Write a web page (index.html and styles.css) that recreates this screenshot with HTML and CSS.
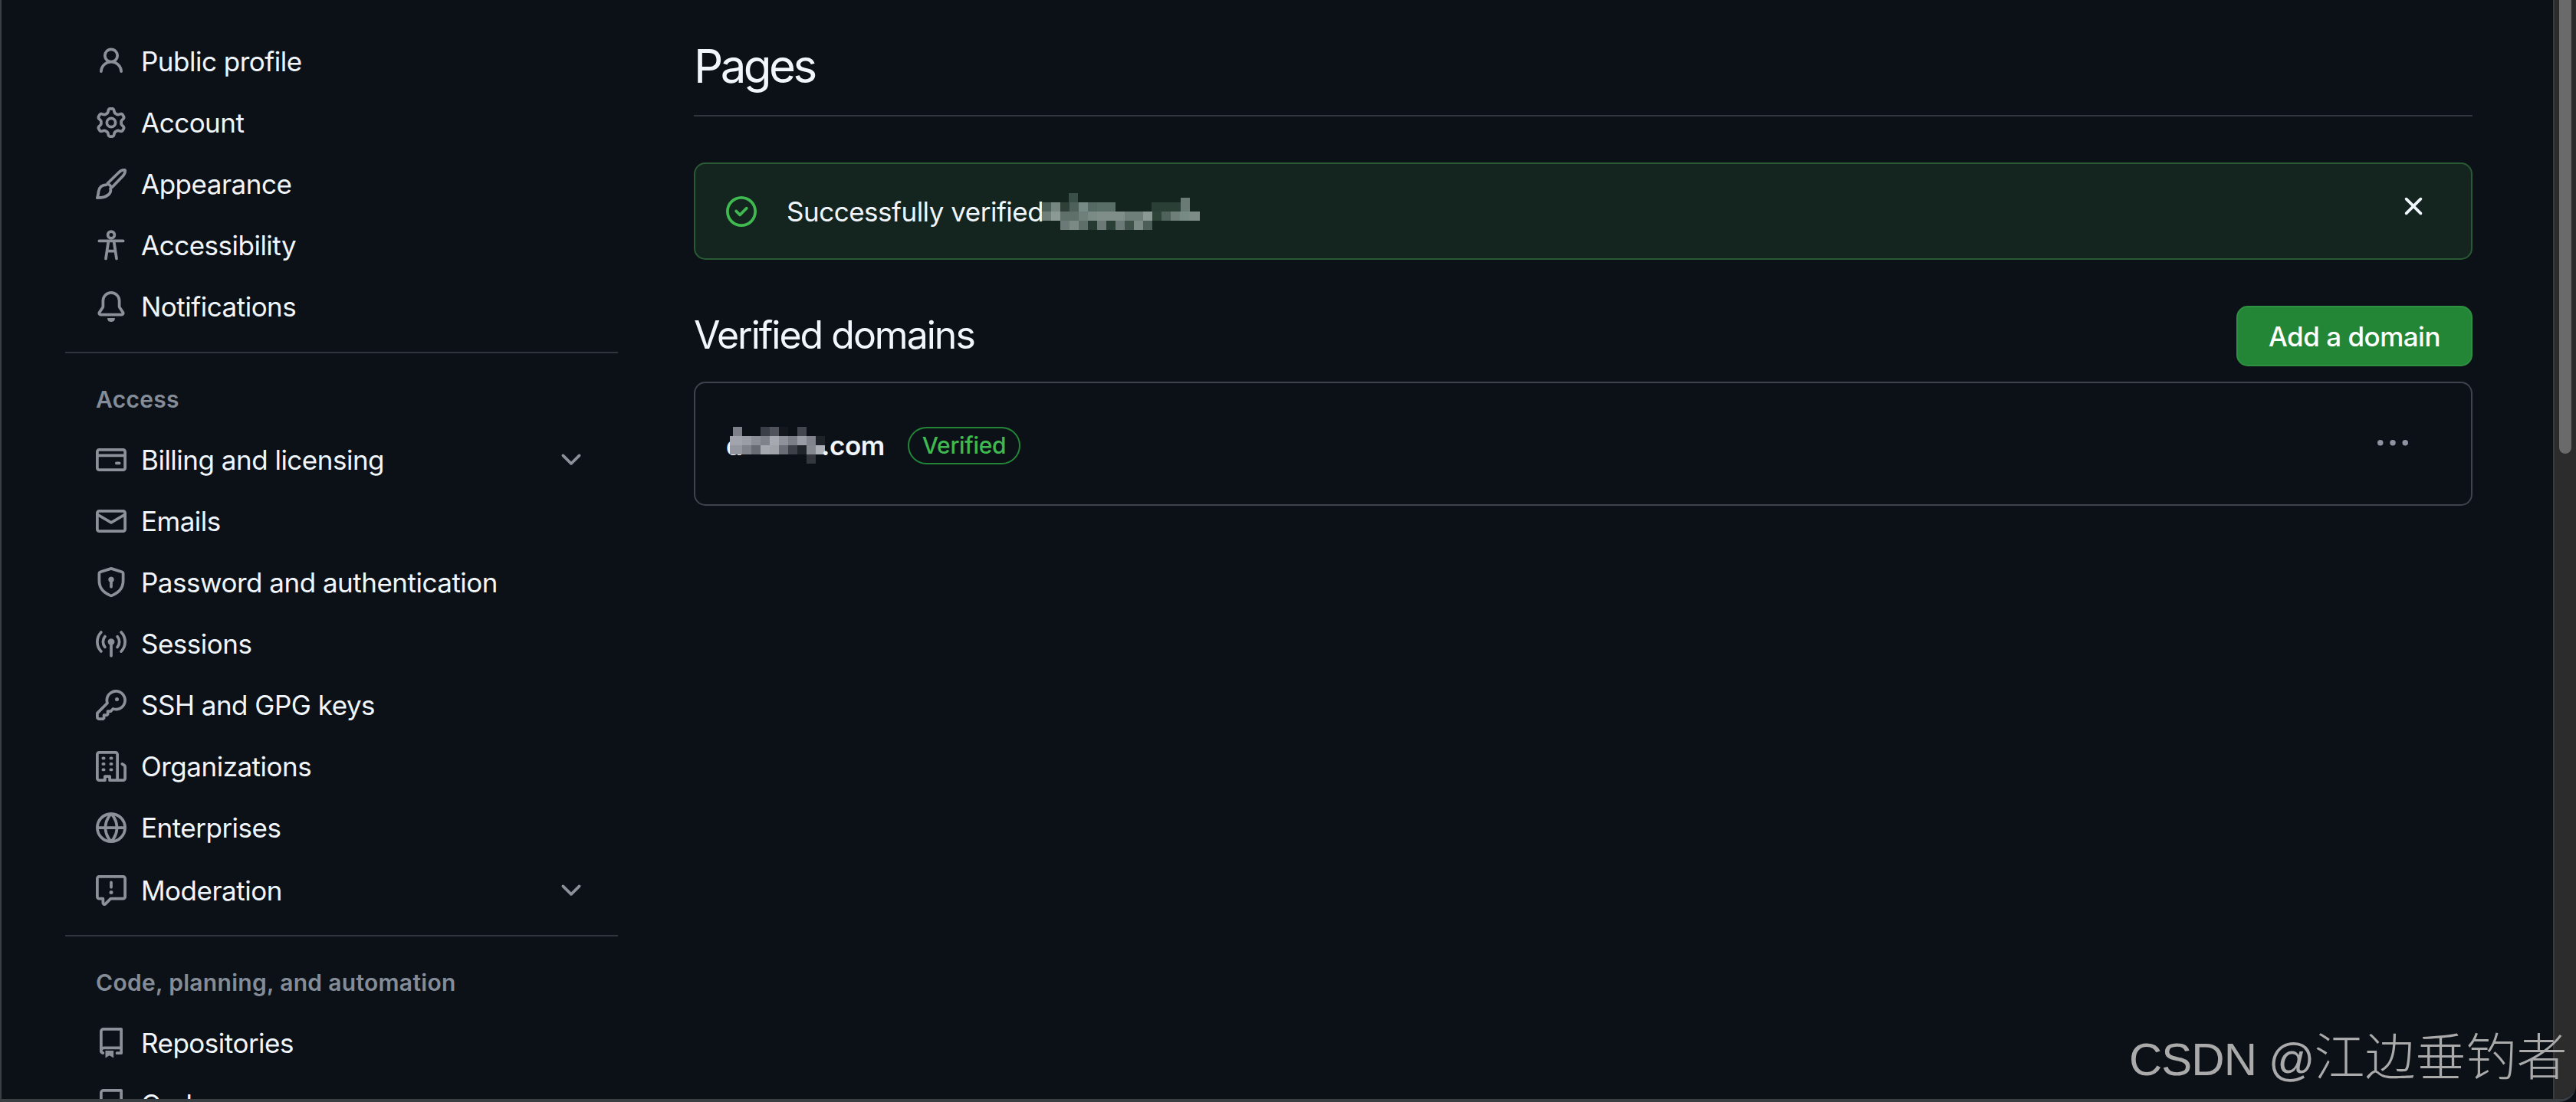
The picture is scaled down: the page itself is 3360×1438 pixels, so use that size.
FILE: index.html
```html
<!DOCTYPE html>
<html lang="en">
<head>
    <meta charset="UTF-8">
    <meta name="viewport" content="width=device-width, initial-scale=1.0">
    <title>Pages</title>
    <link rel="stylesheet" href="styles.css">
</head>
<body>
    <div class="window">
        <aside class="sidebar">
            <nav class="nav-group">
                <a class="nav-item"><svg class="icon" viewBox="0 0 16 16"><path d="M10.561 8.073a6.005 6.005 0 0 1 3.432 5.142.75.75 0 1 1-1.498.07 4.5 4.5 0 0 0-8.99 0 .75.75 0 1 1-1.498-.07 6.004 6.004 0 0 1 3.431-5.142 3.999 3.999 0 1 1 5.123 0ZM10.5 5a2.5 2.5 0 1 0-5 0 2.5 2.5 0 0 0 5 0Z"/></svg><span>Public profile</span></a>
                <a class="nav-item"><svg class="icon" viewBox="0 0 16 16"><path d="M8 0a8.2 8.2 0 0 1 .701.031C9.444.095 9.99.645 10.16 1.29l.288 1.107c.018.066.079.158.212.224.231.114.454.243.668.386.123.082.233.09.299.071l1.103-.303c.644-.176 1.392.021 1.82.63.27.385.506.792.704 1.218.315.675.111 1.422-.364 1.891l-.814.806c-.049.048-.098.147-.088.294.016.257.016.515 0 .772-.01.147.038.246.088.294l.814.806c.475.469.679 1.216.364 1.891a7.977 7.977 0 0 1-.704 1.217c-.428.61-1.176.807-1.82.63l-1.102-.302c-.067-.019-.177-.011-.3.071a5.909 5.909 0 0 1-.668.386c-.133.066-.194.158-.211.224l-.29 1.106c-.168.646-.715 1.196-1.458 1.26a8.006 8.006 0 0 1-1.402 0c-.743-.064-1.289-.614-1.458-1.26l-.289-1.106c-.018-.066-.079-.158-.212-.224a5.738 5.738 0 0 1-.668-.386c-.123-.082-.233-.09-.299-.071l-1.103.303c-.644.176-1.392-.021-1.82-.63a8.12 8.12 0 0 1-.704-1.218c-.315-.675-.111-1.422.363-1.891l.815-.806c.05-.048.098-.147.088-.294a6.214 6.214 0 0 1 0-.772c.01-.147-.038-.246-.088-.294l-.815-.806C.635 6.045.431 5.298.746 4.623a7.92 7.92 0 0 1 .704-1.217c.428-.61 1.176-.807 1.82-.63l1.102.302c.067.019.177.011.3-.071.214-.143.437-.272.668-.386.133-.066.194-.158.211-.224l.29-1.106C6.009.645 6.556.095 7.299.03 7.53.01 7.764 0 8 0Zm-.571 1.525c-.036.003-.108.036-.137.146l-.289 1.105c-.147.561-.549.967-.998 1.189-.173.086-.34.183-.5.29-.417.278-.97.423-1.529.27l-1.103-.303c-.109-.03-.175.016-.195.045-.22.312-.412.644-.573.99-.014.031-.021.11.059.19l.815.806c.411.406.562.957.53 1.456a4.709 4.709 0 0 0 0 .582c.032.499-.119 1.05-.53 1.456l-.815.806c-.081.08-.073.159-.059.19.162.346.353.677.573.989.02.03.085.076.195.046l1.102-.303c.56-.153 1.113-.008 1.53.27.161.107.328.204.501.29.447.222.85.629.997 1.189l.289 1.105c.029.109.101.143.137.146a6.6 6.6 0 0 0 1.142 0c.036-.003.108-.036.137-.146l.289-1.105c.147-.561.549-.967.998-1.189.173-.086.34-.183.5-.29.417-.278.97-.423 1.529-.27l1.103.303c.109.029.175-.016.195-.045.22-.313.411-.644.573-.99.014-.031.021-.11-.059-.19l-.815-.806c-.411-.406-.562-.957-.53-1.456a4.709 4.709 0 0 0 0-.582c-.032-.499.119-1.05.53-1.456l.815-.806c.081-.08.073-.159.059-.19a6.464 6.464 0 0 0-.573-.989c-.02-.03-.085-.076-.195-.046l-1.102.303c-.56.153-1.113.008-1.53-.27a4.44 4.44 0 0 0-.501-.29c-.447-.222-.85-.629-.997-1.189l-.289-1.105c-.029-.11-.101-.143-.137-.146a6.6 6.6 0 0 0-1.142 0ZM11 8a3 3 0 1 1-6 0 3 3 0 0 1 6 0ZM9.5 8a1.5 1.5 0 1 0-3.001.001A1.5 1.5 0 0 0 9.5 8Z"/></svg><span>Account</span></a>
                <a class="nav-item"><svg class="icon icon-line" viewBox="0 0 16 16"><path d="M6.2 7.6 12 2C13.2.9 14.8.4 15.2.8c.4.4-.2 2.1-1.2 3.2L8.4 9.8Z"/><path d="M5.6 8.4C3 8.4 1.7 10 1.4 12c-.1 1.2-.3 2.2-.65 3.25 1.75 0 4.25-.25 5.85-1.65 1.1-1 1.3-2.2 1-3.2"/></svg><span>Appearance</span></a>
                <a class="nav-item"><svg class="icon icon-line" viewBox="0 0 16 16"><circle cx="8" cy="2.6" r="1.75"/><path d="M1.75 5.75h12.5M6.6 5.75 5.2 15M9.4 5.75 10.8 15M5.8 11h4.4"/></svg><span>Accessibility</span></a>
                <a class="nav-item"><svg class="icon" viewBox="0 0 16 16"><path d="M8 16a2 2 0 0 0 1.985-1.75c.017-.137-.097-.25-.235-.25h-3.5c-.138 0-.252.113-.235.25A2 2 0 0 0 8 16ZM3 5a5 5 0 0 1 10 0v2.947c0 .05.015.098.042.139l1.703 2.555A1.519 1.519 0 0 1 13.482 13H2.518a1.516 1.516 0 0 1-1.263-2.36l1.703-2.554A.255.255 0 0 0 3 7.947Zm5-3.5A3.5 3.5 0 0 0 4.5 5v2.947c0 .346-.102.683-.294.97l-1.703 2.556a.017.017 0 0 0-.003.01l.001.006c0 .002.002.004.004.006l.006.004.007.001h10.964l.007-.001.006-.004.004-.006.001-.007a.017.017 0 0 0-.003-.01l-1.703-2.554a1.745 1.745 0 0 1-.294-.97V5A3.5 3.5 0 0 0 8 1.5Z"/></svg><span>Notifications</span></a>
            </nav>
            <nav class="nav-group">
                <div class="nav-heading">Access</div>
                <a class="nav-item"><svg class="icon" viewBox="0 0 16 16"><path d="M10.75 9a.75.75 0 0 0 0 1.5h1.5a.75.75 0 0 0 0-1.5h-1.5Z"/><path d="M0 3.75C0 2.784.784 2 1.75 2h12.5c.966 0 1.75.784 1.75 1.75v8.5A1.75 1.75 0 0 1 14.25 14H1.75A1.75 1.75 0 0 1 0 12.25ZM14.5 6.5h-13v5.75c0 .138.112.25.25.25h12.5a.25.25 0 0 0 .25-.25Zm0-2.75a.25.25 0 0 0-.25-.25H1.75a.25.25 0 0 0-.25.25V5h13Z"/></svg><span>Billing and licensing</span><svg class="icon chevron" viewBox="0 0 16 16"><path d="M12.78 5.22a.749.749 0 0 1 0 1.06l-4.25 4.25a.749.749 0 0 1-1.06 0L3.22 6.28a.749.749 0 1 1 1.06-1.06L8 8.939l3.72-3.719a.749.749 0 0 1 1.06 0Z"/></svg></a>
                <a class="nav-item"><svg class="icon" viewBox="0 0 16 16"><path d="M1.75 2h12.5c.966 0 1.75.784 1.75 1.75v8.5A1.75 1.75 0 0 1 14.25 14H1.75A1.75 1.75 0 0 1 0 12.25v-8.5C0 2.784.784 2 1.75 2ZM1.5 12.251c0 .138.112.25.25.25h12.5a.25.25 0 0 0 .25-.25V5.809L8.38 9.397a.75.75 0 0 1-.76 0L1.5 5.809v6.442Zm13-8.181v-.32a.25.25 0 0 0-.25-.25H1.75a.25.25 0 0 0-.25.25v.32L8 7.88Z"/></svg><span>Emails</span></a>
                <a class="nav-item"><svg class="icon" viewBox="0 0 16 16"><path d="m8.533.133 5.25 1.68A1.75 1.75 0 0 1 15 3.48V7c0 1.566-.32 3.182-1.303 4.682-.983 1.498-2.585 2.813-5.032 3.855a1.697 1.697 0 0 1-1.33 0c-2.447-1.042-4.049-2.357-5.032-3.855C1.32 10.182 1 8.566 1 7V3.48a1.75 1.75 0 0 1 1.217-1.667l5.25-1.68a1.748 1.748 0 0 1 1.066 0Zm-.61 1.429.001.001-5.25 1.68a.251.251 0 0 0-.174.237V7c0 1.36.275 2.666 1.057 3.859.784 1.194 2.121 2.342 4.366 3.298a.196.196 0 0 0 .154 0c2.245-.957 3.582-2.103 4.366-3.297C13.225 9.666 13.5 8.358 13.5 7V3.48a.25.25 0 0 0-.174-.238l-5.25-1.68a.25.25 0 0 0-.153 0ZM9.5 6.5c0 .536-.286 1.032-.75 1.3v2.45a.75.75 0 0 1-1.5 0V7.8A1.5 1.5 0 1 1 9.5 6.5Z"/></svg><span>Password and authentication</span></a>
                <a class="nav-item"><svg class="icon" viewBox="0 0 16 16"><path d="M8.75 8.582v5.668a.75.75 0 0 1-1.5 0V8.582a1.75 1.75 0 1 1 1.5 0Zm3.983-7.125a.75.75 0 0 1 1.06.026A7.976 7.976 0 0 1 16 7c0 2.139-.84 4.083-2.207 5.517a.75.75 0 1 1-1.086-1.034A6.474 6.474 0 0 0 14.5 7a6.474 6.474 0 0 0-1.793-4.483.75.75 0 0 1 .026-1.06Zm-9.466 0c.3.286.312.76.026 1.06A6.474 6.474 0 0 0 1.5 7a6.47 6.47 0 0 0 1.793 4.483.75.75 0 0 1-1.086 1.034A7.973 7.973 0 0 1 0 7c0-2.139.84-4.083 2.207-5.517a.75.75 0 0 1 1.06-.026Zm8.556 2.321A4.988 4.988 0 0 1 13 7a4.988 4.988 0 0 1-1.177 3.222.75.75 0 1 1-1.146-.967A3.487 3.487 0 0 0 11.5 7c0-.86-.309-1.645-.823-2.255a.75.75 0 0 1 1.146-.967Zm-6.492.958A3.48 3.48 0 0 0 4.5 7a3.48 3.48 0 0 0 .823 2.255.75.75 0 0 1-1.146.967A4.981 4.981 0 0 1 3 7a4.99 4.99 0 0 1 1.177-3.222.75.75 0 1 1 1.146.967Z"/></svg><span>Sessions</span></a>
                <a class="nav-item"><svg class="icon" viewBox="0 0 16 16"><path d="M10.5 0a5.499 5.499 0 1 1-1.288 10.848l-.932.932a.749.749 0 0 1-.53.22H7v.75a.749.749 0 0 1-.22.53l-.5.5a.749.749 0 0 1-.53.22H5v.75a.749.749 0 0 1-.22.53l-.5.5a.749.749 0 0 1-.53.22h-2A1.75 1.75 0 0 1 0 14.25v-2c0-.199.079-.389.22-.53l4.932-4.932A5.5 5.5 0 0 1 10.5 0Zm-4 5.5c-.001.431.069.86.205 1.269a.75.75 0 0 1-.181.768L1.5 12.56v1.69c0 .138.112.25.25.25h1.69l.06-.06v-1.19a.75.75 0 0 1 .75-.75h1.19l.06-.06v-1.19a.75.75 0 0 1 .75-.75h1.19l1.023-1.025a.75.75 0 0 1 .768-.18A4 4 0 1 0 6.5 5.5ZM11 6a1 1 0 1 1 0-2 1 1 0 0 1 0 2Z"/></svg><span>SSH and GPG keys</span></a>
                <a class="nav-item"><svg class="icon" viewBox="0 0 16 16"><path d="M1.75 16A1.75 1.75 0 0 1 0 14.25V1.75C0 .784.784 0 1.75 0h8.5C11.216 0 12 .784 12 1.75v12.5c0 .085-.006.168-.018.25h2.268a.25.25 0 0 0 .25-.25V8.285a.25.25 0 0 0-.111-.208l-1.055-.703a.749.749 0 1 1 .832-1.248l1.055.703c.487.325.779.871.779 1.456v5.965A1.75 1.75 0 0 1 14.25 16h-3.5a.766.766 0 0 1-.197-.026c-.099.017-.2.026-.303.026h-3a.75.75 0 0 1-.75-.75V14h-1v1.25a.75.75 0 0 1-.75.75Zm-.25-1.75c0 .138.112.25.25.25H4v-1.25a.75.75 0 0 1 .75-.75h2.5a.75.75 0 0 1 .75.75v1.25h2.25a.25.25 0 0 0 .25-.25V1.75a.25.25 0 0 0-.25-.25h-8.5a.25.25 0 0 0-.25.25ZM3.75 6h.5a.75.75 0 0 1 0 1.5h-.5a.75.75 0 0 1 0-1.5ZM3 3.75A.75.75 0 0 1 3.75 3h.5a.75.75 0 0 1 0 1.5h-.5A.75.75 0 0 1 3 3.75Zm4 3A.75.75 0 0 1 7.75 6h.5a.75.75 0 0 1 0 1.5h-.5A.75.75 0 0 1 7 6.75ZM7.75 3h.5a.75.75 0 0 1 0 1.5h-.5a.75.75 0 0 1 0-1.5ZM3 9.75A.75.75 0 0 1 3.75 9h.5a.75.75 0 0 1 0 1.5h-.5A.75.75 0 0 1 3 9.75ZM7.75 9h.5a.75.75 0 0 1 0 1.5h-.5a.75.75 0 0 1 0-1.5Z"/></svg><span>Organizations</span></a>
                <a class="nav-item"><svg class="icon" viewBox="0 0 16 16"><path d="M8 0a8 8 0 1 1 0 16A8 8 0 0 1 8 0ZM5.78 8.75a9.64 9.64 0 0 0 1.363 4.177c.255.426.542.832.857 1.215.245-.296.551-.705.857-1.215A9.64 9.64 0 0 0 10.22 8.75Zm4.44-1.5a9.64 9.64 0 0 0-1.363-4.177c-.307-.51-.612-.919-.857-1.215a9.927 9.927 0 0 0-.857 1.215A9.64 9.64 0 0 0 5.78 7.25Zm-5.944 1.5H1.543a6.507 6.507 0 0 0 4.666 5.5c-.123-.181-.24-.365-.352-.552-.715-1.192-1.437-2.874-1.581-4.948Zm-2.733-1.5h2.733c.144-2.074.866-3.756 1.58-4.948.12-.197.237-.381.353-.552a6.507 6.507 0 0 0-4.666 5.5Zm10.181 1.5c-.144 2.074-.866 3.756-1.58 4.948-.12.197-.237.381-.353.552a6.507 6.507 0 0 0 4.666-5.5Zm2.733-1.5a6.507 6.507 0 0 0-4.666-5.5c.123.181.24.365.353.552.714 1.192 1.436 2.874 1.58 4.948Z"/></svg><span>Enterprises</span></a>
                <a class="nav-item nav-item-last"><svg class="icon" viewBox="0 0 16 16"><path d="M0 1.75C0 .784.784 0 1.75 0h12.5C15.216 0 16 .784 16 1.75v9.5A1.75 1.75 0 0 1 14.25 13H8.06l-2.573 2.573A1.458 1.458 0 0 1 3 14.543V13H1.75A1.75 1.75 0 0 1 0 11.25Zm1.75-.25a.25.25 0 0 0-.25.25v9.5c0 .138.112.25.25.25h2a.75.75 0 0 1 .75.75v2.19l2.72-2.72a.749.749 0 0 1 .53-.22h6.5a.25.25 0 0 0 .25-.25v-9.5a.25.25 0 0 0-.25-.25Zm7 2.25v2.5a.75.75 0 0 1-1.5 0v-2.5a.75.75 0 0 1 1.5 0ZM9 9a1 1 0 1 1-2 0 1 1 0 0 1 2 0Z"/></svg><span>Moderation</span><svg class="icon chevron" viewBox="0 0 16 16"><path d="M12.78 5.22a.749.749 0 0 1 0 1.06l-4.25 4.25a.749.749 0 0 1-1.06 0L3.22 6.28a.749.749 0 1 1 1.06-1.06L8 8.939l3.72-3.719a.749.749 0 0 1 1.06 0Z"/></svg></a>
            </nav>
            <nav class="nav-group">
                <div class="nav-heading">Code, planning, and automation</div>
                <a class="nav-item"><svg class="icon icon-line" viewBox="0 0 16 16"><path d="M2.75 12.5V2A1.25 1.25 0 0 1 4 .75h9.25v12.5H11M2.75 11.9c0-.8.6-1.4 1.4-1.4h9.1M2.75 12c0 .7.4 1.1 1 1.25"/><path class="icon-fill" d="M5 12h4.25v3.75L7.1 14.5 5 15.75Z"/></svg><span>Repositories</span></a>
                <a class="nav-item"><svg class="icon icon-line" viewBox="0 0 16 16"><path d="M2.75 12.5V2A1.25 1.25 0 0 1 4 .75h9.25v12.5H11M2.75 11.9c0-.8.6-1.4 1.4-1.4h9.1M2.75 12c0 .7.4 1.1 1 1.25"/></svg><span>Codespaces</span></a>
            </nav>
        </aside>

        <main class="content">
            <h1 class="page-title">Pages</h1>

            <div class="flash">
                <svg class="icon flash-check" viewBox="0 0 16 16"><path d="M8 16A8 8 0 1 1 8 0a8 8 0 0 1 0 16Zm0-1.5a6.5 6.5 0 1 0 0-13 6.5 6.5 0 0 0 0 13Z"/><path d="M11.28 6.78a.75.75 0 0 0-1.06-1.06L7.25 8.69 5.78 7.22a.75.75 0 0 0-1.06 1.06l2 2a.75.75 0 0 0 1.06 0l3.5-3.5Z"/></svg>
                <span class="flash-text">Successfully verified</span>
                <svg class="smudge flash-smudge" width="214" height="48" viewBox="0 0 214 48">
                    <rect x="42" y="0" width="12" height="12" fill="#3a4f47"/>
                    <rect x="7" y="12" width="12" height="12" fill="#4d5f59"/><rect x="19" y="12" width="12" height="12" fill="#768680"/><rect x="31" y="12" width="12" height="12" fill="#2e4038"/>
                    <rect x="43" y="12" width="12" height="12" fill="#4d6059"/><rect x="55" y="12" width="12" height="12" fill="#788a85"/><rect x="67" y="12" width="12" height="12" fill="#566a64"/><rect x="79" y="12" width="24" height="12" fill="#5a6e68"/>
                    <rect x="150" y="12" width="38" height="12" fill="#2a4036"/><rect x="188" y="6" width="12" height="18" fill="#6a7b75"/>
                    <rect x="7" y="24" width="12" height="12" fill="#6f7e79"/><rect x="19" y="24" width="12" height="12" fill="#8c9a96"/><rect x="31" y="24" width="24" height="12" fill="#5f6f6a"/>
                    <rect x="55" y="24" width="12" height="12" fill="#6f807a"/><rect x="67" y="24" width="12" height="12" fill="#7a8a85"/><rect x="79" y="24" width="36" height="12" fill="#7f8e89"/><rect x="115" y="24" width="24" height="12" fill="#6e7e79"/>
                    <rect x="139" y="24" width="12" height="12" fill="#8b9994"/><rect x="151" y="24" width="12" height="12" fill="#2f4438"/><rect x="163" y="24" width="12" height="12" fill="#4f625b"/><rect x="175" y="24" width="12" height="12" fill="#6e7e79"/><rect x="187" y="24" width="12" height="12" fill="#788a84"/><rect x="199" y="24" width="14" height="12" fill="#7d8c87"/>
                    <rect x="31" y="36" width="12" height="12" fill="#6b7a76"/><rect x="43" y="36" width="12" height="12" fill="#7b8a85"/><rect x="55" y="36" width="12" height="12" fill="#5e6e69"/><rect x="67" y="36" width="12" height="12" fill="#253a31"/>
                    <rect x="79" y="36" width="12" height="12" fill="#6b7a76"/><rect x="91" y="36" width="12" height="12" fill="#2a3f36"/><rect x="103" y="36" width="12" height="12" fill="#6b7a76"/><rect x="115" y="36" width="12" height="12" fill="#3e524a"/><rect x="127" y="36" width="12" height="12" fill="#7b8a85"/><rect x="139" y="36" width="12" height="12" fill="#4b5e57"/>
                </svg>
                <svg class="icon flash-close" viewBox="0 0 16 16"><path d="M3.72 3.72a.75.75 0 0 1 1.06 0L8 6.94l3.22-3.22a.749.749 0 0 1 1.275.326.749.749 0 0 1-.215.734L9.06 8l3.22 3.22a.749.749 0 0 1-.326 1.275.749.749 0 0 1-.734-.215L8 9.06l-3.22 3.22a.751.751 0 0 1-1.042-.018.751.751 0 0 1-.018-1.042L6.94 8 3.72 4.78a.75.75 0 0 1 0-1.06Z"/></svg>
            </div>

            <div class="section-head">
                <h2 class="section-title">Verified domains</h2>
                <button class="btn-primary">Add a domain</button>
            </div>

            <div class="domain-box">
                <span class="domain-name">d<svg class="smudge domain-smudge" width="124" height="48" viewBox="0 0 124 48">
                    <rect x="4" y="0" width="12" height="12" fill="#7d8088"/><rect x="40" y="0" width="12" height="12" fill="#3b3f48"/><rect x="52" y="0" width="12" height="12" fill="#50535b"/><rect x="64" y="0" width="12" height="12" fill="#14181e"/><rect x="88" y="0" width="12" height="12" fill="#43464e"/>
                    <rect x="0" y="12" width="16" height="12" fill="#a1a4ad"/><rect x="16" y="12" width="12" height="12" fill="#9a9da5"/><rect x="28" y="12" width="12" height="12" fill="#8b8e96"/><rect x="40" y="12" width="12" height="12" fill="#7f828a"/><rect x="52" y="12" width="12" height="12" fill="#a6a9b0"/><rect x="64" y="12" width="12" height="12" fill="#8e9199"/><rect x="76" y="12" width="12" height="12" fill="#7b7e86"/><rect x="88" y="12" width="12" height="12" fill="#999ca4"/><rect x="100" y="12" width="12" height="12" fill="#80838b"/><rect x="112" y="12" width="12" height="12" fill="#1e2229"/>
                    <rect x="0" y="24" width="16" height="12" fill="#94979f"/><rect x="16" y="24" width="12" height="12" fill="#80838b"/><rect x="28" y="24" width="12" height="12" fill="#686b73"/><rect x="40" y="24" width="12" height="12" fill="#a5a8af"/><rect x="52" y="24" width="12" height="12" fill="#9fa2a9"/><rect x="64" y="24" width="12" height="12" fill="#6a6d75"/><rect x="76" y="24" width="12" height="12" fill="#3d4049"/><rect x="88" y="24" width="12" height="12" fill="#20242b"/><rect x="100" y="24" width="12" height="12" fill="#85888f"/><rect x="112" y="24" width="12" height="12" fill="#adb0b6"/>
                    <rect x="100" y="36" width="12" height="12" fill="#34373d"/>
                </svg>.com</span>
                <span class="badge">Verified</span>
                <svg class="icon domain-menu" viewBox="0 0 16 16"><path d="M8 9a1.5 1.5 0 1 0 0-3 1.5 1.5 0 0 0 0 3ZM1.5 9a1.5 1.5 0 1 0 0-3 1.5 1.5 0 0 0 0 3Zm13 0a1.5 1.5 0 1 0 0-3 1.5 1.5 0 0 0 0 3Z"/></svg>
            </div>
        </main>

        <div class="scrollbar"><div class="scrollbar-thumb"></div></div>
    </div>
    <div class="watermark"><span class="watermark-latin">CSDN @</span>江边垂钓者</div>
</body>
</html>
```

FILE: styles.css
```css
html, body {
    margin: 0;
    padding: 0;
    height: 100%;
    background-color: #0d1117;
    overflow: hidden;
}
body {
    font-family: Inter, "Liberation Sans", sans-serif;
    font-size: 35px;
    letter-spacing: -0.5px;
    color: #f0f6fc;
    position: relative;
}
.window {
    display: flex;
    height: 1438px;
    box-sizing: border-box;
    overflow: hidden;
    background-color: #0c1118;
    border-left: 2px solid #3a3f44;
    border-bottom: 4px solid #3a3f44;
    border-bottom-right-radius: 22px;
}
.icon {
    width: 40px;
    height: 40px;
    flex-shrink: 0;
    fill: #8b9099;
}
.icon-line {
    fill: none;
    stroke: #8b9099;
    stroke-width: 1.5;
    stroke-linecap: round;
    stroke-linejoin: round;
}
.icon-fill {
    fill: #8b9099;
    stroke: none;
}

/* sidebar */
.sidebar {
    width: 721px;
    margin-left: 83px;
    padding-top: 40px;
    flex-shrink: 0;
}
.nav-group {
    padding-bottom: 19px;
    border-bottom: 2px solid #30363d;
}
.nav-group:last-child {
    border-bottom: none;
}
.nav-item {
    display: flex;
    align-items: center;
    height: 80px;
    padding-left: 40px;
    gap: 19px;
    color: #f0f6fc;
}
.nav-item-last {
    box-sizing: border-box;
    height: 81px;
    padding-top: 2px;
}
.nav-heading {
    height: 99px;
    box-sizing: border-box;
    padding: 40px 0 0 40px;
    font-size: 30px;
    font-weight: 600;
    line-height: 40px;
    letter-spacing: 0.3px;
    color: #848c97;
}
.chevron {
    margin-left: auto;
    margin-right: 41px;
}

/* main column */
.content {
    width: 2320px;
    margin-left: 99px;
    flex-shrink: 0;
}
.page-title {
    margin: 0;
    height: 152px;
    box-sizing: border-box;
    padding-top: 50px;
    font-size: 60px;
    font-weight: 400;
    line-height: 72px;
    letter-spacing: -3.6px;
    border-bottom: 2px solid #30363d;
}
.flash {
    display: flex;
    align-items: center;
    height: 127px;
    box-sizing: border-box;
    margin-top: 60px;
    padding: 0 40px;
    background-color: #142520;
    border: 2px solid #2a5a33;
    border-radius: 15px;
}
.flash-check {
    fill: #3fb950;
    margin-right: 39px;
}
.flash-text {
    white-space: nowrap;
}
.flash-smudge {
    margin-left: -9px;
}
.flash-close {
    margin-left: auto;
    margin-top: -13px;
    margin-right: 15px;
    fill: #f0f6fc;
}
.section-head {
    display: flex;
    align-items: center;
    justify-content: space-between;
    margin-top: 60px;
}
.section-title {
    margin: 0 0 4px;
    font-size: 50px;
    font-weight: 400;
    line-height: 60px;
    letter-spacing: -2px;
}
.btn-primary {
    height: 79px;
    padding: 0 40px;
    font-family: inherit;
    font-size: 35px;
    font-weight: 500;
    letter-spacing: -0.5px;
    color: #fff;
    background-color: #238636;
    border: 2px solid #2e9141;
    border-radius: 15px;
}
.domain-box {
    display: flex;
    align-items: center;
    height: 162px;
    box-sizing: border-box;
    margin-top: 20px;
    padding: 4px 40px 0;
    border: 2px solid #3d444d;
    border-radius: 15px;
}
.domain-name {
    display: flex;
    align-items: center;
    font-weight: 600;
}
.badge {
    display: flex;
    align-items: center;
    height: 49px;
    box-sizing: border-box;
    margin-left: 30px;
    padding: 0 17px;
    font-size: 30px;
    font-weight: 500;
    letter-spacing: -0.3px;
    color: #3fb950;
    border: 2px solid #238636;
    border-radius: 25px;
}
.domain-menu {
    margin-left: auto;
    margin-right: 42px;
    margin-top: -4px;
    fill: #8d93a0;
}
.smudge {
    flex-shrink: 0;
}
.domain-smudge {
    margin-left: -16px;
    margin-right: -5px;
}

/* window chrome */
.scrollbar {
    width: 30px;
    margin-left: auto;
    box-sizing: border-box;
    padding-left: 6px;
    background-color: #2c2c2c;
    border-left: 2px solid #3a3a3a;
}
.scrollbar-thumb {
    width: 16px;
    height: 592px;
    background-color: #6a6a6a;
    border-radius: 0 0 8px 8px;
}
.watermark {
    position: absolute;
    left: 2777px;
    top: 1340px;
    font-family: "Liberation Sans", "Noto Sans CJK SC", sans-serif;
    font-size: 66px;
    font-weight: 300;
    line-height: 80px;
    letter-spacing: 0;
    color: #aaaaaa;
    white-space: nowrap;
}
.watermark-latin {
    font-size: 60px;
    letter-spacing: -1px;
}
```
